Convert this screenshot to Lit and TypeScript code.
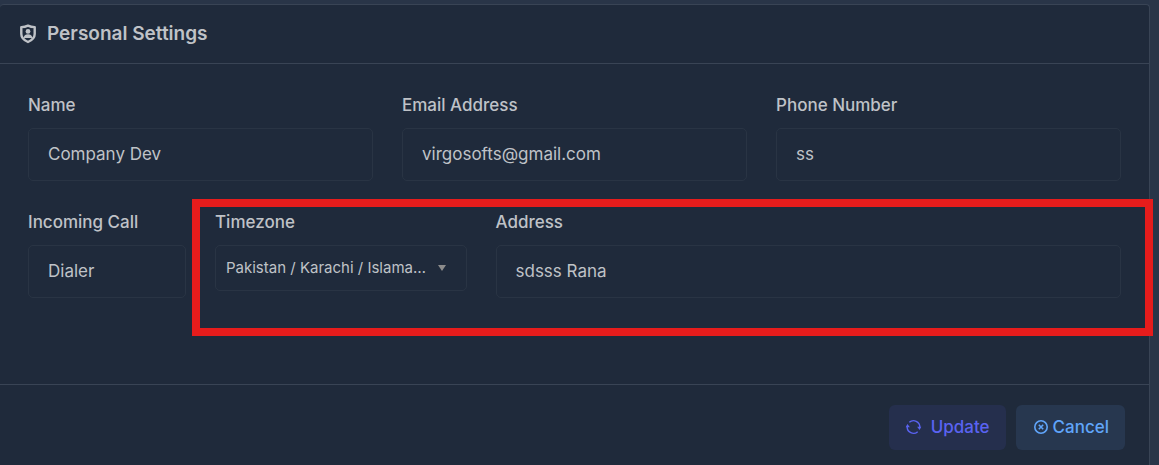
import { LitElement, html, css } from "lit";
import { customElement, property } from "lit/decorators.js";

@customElement("text-field")
class TextField extends LitElement {
  @property() label = "";
  @property() value = "";
  @property() type = "text";

  static styles = css`
    :host {
      display: block;
      min-width: 0;
    }
    .label {
      display: block;
      margin-bottom: 12px;
      font-size: 17px;
      line-height: 22px;
      font-weight: 500;
    }
    .input {
      display: block;
      box-sizing: border-box;
      width: 100%;
      height: 53px;
      margin: 0;
      padding: 0 19px 2px;
      border: 1px solid #293444;
      border-radius: 5px;
      background: transparent;
      color: inherit;
      font: inherit;
      font-size: 17px;
      outline: none;
    }
  `;

  render() {
    return html`
      <label class="label" for="field">${this.label}</label>
      <input class="input" id="field" type=${this.type} .value=${this.value} />
    `;
  }
}

@customElement("select-field")
class SelectField extends LitElement {
  @property() label = "";
  @property({ attribute: false }) options: string[] = [];

  static styles = css`
    :host {
      display: block;
      min-width: 0;
    }
    .label {
      display: block;
      margin-bottom: 12px;
      font-size: 17px;
      line-height: 22px;
      font-weight: 500;
    }
    .box {
      display: flex;
      align-items: center;
      box-sizing: border-box;
      height: 46px;
      padding: 0 20px 0 10px;
      border: 1px solid #293444;
      border-radius: 5px;
    }
    .select {
      flex: 1;
      min-width: 0;
      height: 44px;
      margin: 0;
      padding: 0 0 2px;
      border: 0;
      appearance: none;
      background: transparent;
      color: inherit;
      font: inherit;
      font-size: 15px;
      overflow: hidden;
      white-space: nowrap;
      text-overflow: ellipsis;
      outline: none;
    }
    .arrow {
      flex: none;
      margin-left: 4px;
      fill: #8c8c8c;
      pointer-events: none;
    }
  `;

  render() {
    return html`
      <label class="label" for="field">${this.label}</label>
      <div class="box">
        <select class="select" id="field">
          ${this.options.map((o) => html`<option>${o}</option>`)}
        </select>
        <svg class="arrow" width="8" height="6" viewBox="0 0 8 6"><path d="M0 0h8L4 6z" /></svg>
      </div>
    `;
  }
}

@customElement("app-root")
class AppRoot extends LitElement {
  static styles = css`
    :host {
      display: block;
      box-sizing: border-box;
      min-height: 100vh;
      padding: 4px 9px 0 0;
      background: #293548;
      color: #bfc2c7;
      font-family: Inter, "Liberation Sans", sans-serif;
      font-size: 17px;
    }
    .card {
      border: 1px solid #394455;
      border-left: 0;
      border-bottom: 0;
      border-radius: 4px 4px 0 0;
      background: #1f2a3b;
    }
    .header {
      display: flex;
      align-items: center;
      gap: 10px;
      height: 58px;
      padding: 0 19px;
      border-bottom: 1px solid #394455;
    }
    .title {
      margin: 0;
      font-size: 19px;
      line-height: 26px;
      font-weight: 600;
    }
    .shield {
      flex: none;
    }
    .body {
      display: grid;
      gap: 30px;
      padding: 30px 28px 86px;
    }
    .row {
      position: relative;
      display: grid;
      grid-template-columns: repeat(12, minmax(0, 1fr));
      column-gap: 29px;
      align-items: start;
    }
    .span-2 {
      grid-column: span 2;
    }
    .span-3 {
      grid-column: span 3;
    }
    .span-4 {
      grid-column: span 4;
    }
    .span-7 {
      grid-column: span 7;
    }
    .highlight {
      position: absolute;
      grid-column: 3 / -1;
      inset: -12px -32px -38px -23px;
      border: 8px solid #e61c1c;
      pointer-events: none;
    }
    .footer {
      display: flex;
      justify-content: flex-end;
      gap: 10px;
      padding: 20px 24px 15px;
      border-top: 1px solid #394455;
    }
    .button {
      display: flex;
      align-items: center;
      height: 45px;
      margin: 0;
      padding: 0 16px 1px;
      border: 0;
      border-radius: 6px;
      font: inherit;
      font-size: 17px;
      font-weight: 500;
      cursor: pointer;
    }
    .update {
      gap: 9px;
      background: #252f4d;
      color: #5a63f2;
    }
    .cancel {
      gap: 4px;
      background: #27374f;
      color: #60a5fa;
    }
  `;

  render() {
    return html`
      <form class="card" @submit=${(e: Event) => e.preventDefault()}>
        <header class="header">
          <svg class="shield" width="18" height="20" viewBox="0 0 18 20" fill="none" aria-hidden="true">
            <path d="M9 1.600C11 2.600 13.200 3.100 15.700 3.100V10c0 3.800-2.900 6.300-6.700 8-3.800-1.700-6.700-4.200-6.700-8V3.100C4.800 3.100 7 2.600 9 1.600z" stroke="#bfc2c7" stroke-width="2.400" stroke-linejoin="round" />
            <circle cx="9" cy="7.400" r="2.400" fill="#bfc2c7" />
            <path d="M4.600 14c.2-2.400 1.700-3.800 4.400-3.800s4.200 1.400 4.400 3.800z" fill="#bfc2c7" />
          </svg>
          <h2 class="title">Personal Settings</h2>
        </header>
        <div class="body">
          <div class="row">
            <text-field class="span-4" label="Name" value="Company Dev"></text-field>
            <text-field class="span-4" label="Email Address" type="email" value="virgosofts@gmail.com"></text-field>
            <text-field class="span-4" label="Phone Number" type="tel" value="ss"></text-field>
          </div>
          <div class="row">
            <text-field class="span-2" label="Incoming Call" value="Dialer"></text-field>
            <select-field class="span-3" label="Timezone" .options=${["Pakistan / Karachi / Islamabad"]}></select-field>
            <text-field class="span-7" label="Address" value="sdsss Rana"></text-field>
            <div class="highlight"></div>
          </div>
        </div>
        <footer class="footer">
          <button class="button update" type="submit">
            <svg width="17" height="16" viewBox="0 0 17 16" fill="none" stroke="currentColor" stroke-width="1.400" aria-hidden="true">
              <path d="M4.300 3.300A6.300 6.300 0 0 1 14.800 8.300M12.700 12.700A6.300 6.300 0 0 1 2.200 7.700" />
              <path d="M12.100 7.700h4.200l-1.700 3.200zM.7 8.300h4.200L2.400 5.100z" fill="currentColor" stroke="none" />
            </svg>
            Update
          </button>
          <button class="button cancel" type="button">
            <svg width="17" height="16" viewBox="0 0 17 16" fill="none" stroke="currentColor" stroke-width="1.600" aria-hidden="true">
              <circle cx="9" cy="8" r="6.200" />
              <path d="M6.800 5.800l4.400 4.400M11.200 5.800l-4.400 4.400" />
            </svg>
            Cancel
          </button>
        </footer>
      </form>
    `;
  }
}
